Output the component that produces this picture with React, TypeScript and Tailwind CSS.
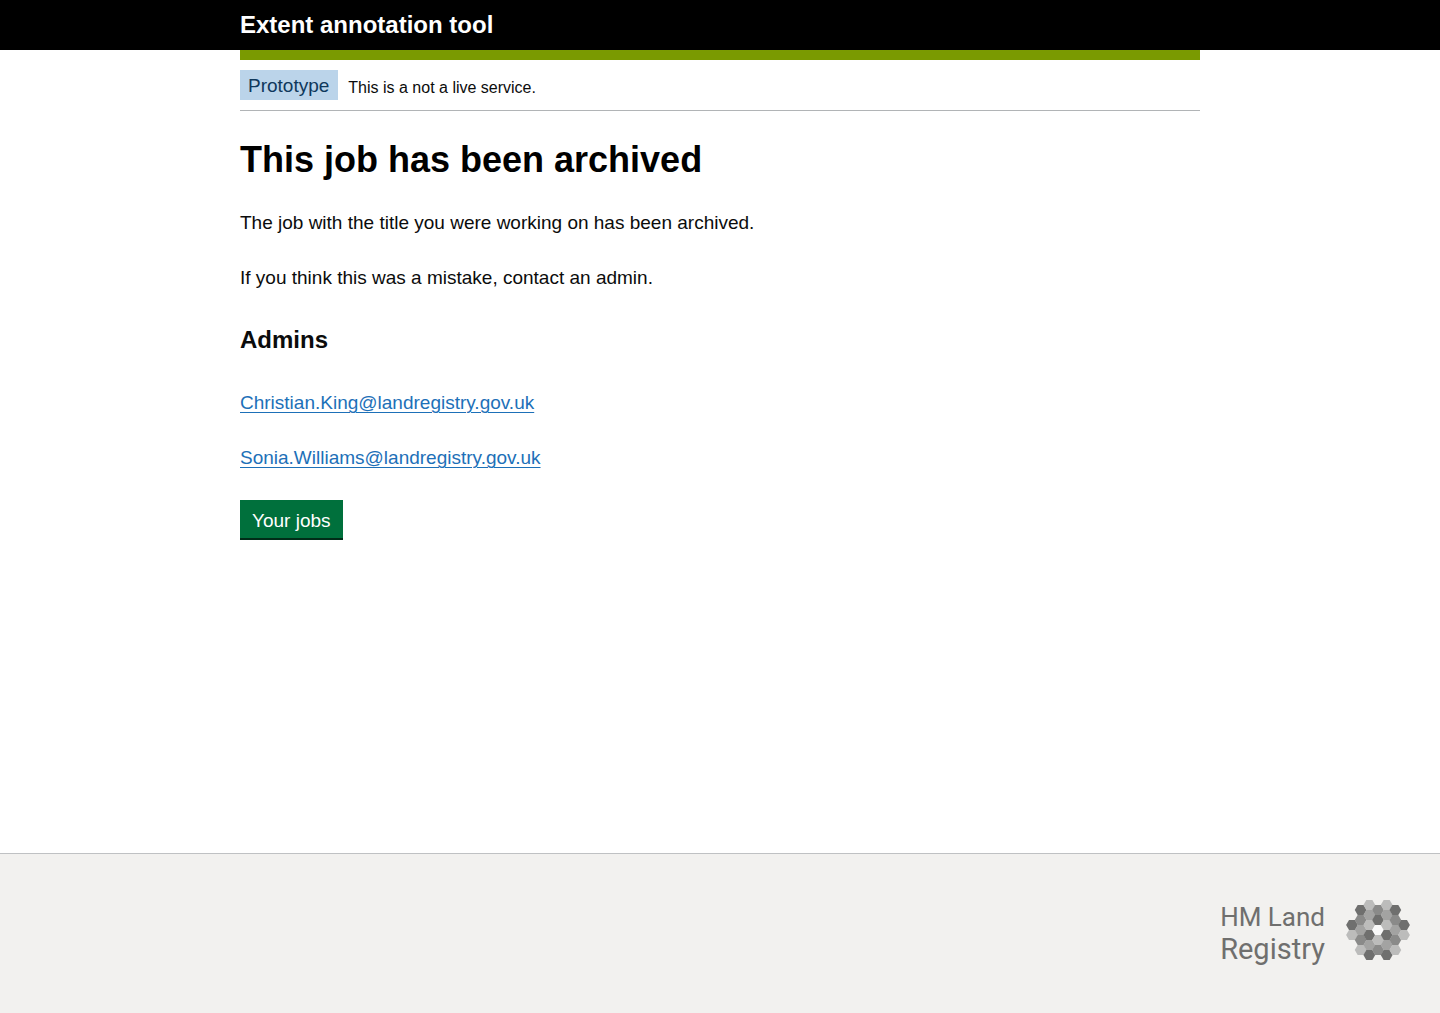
const DARK = '#6f6f6e';
const MID = '#8a8a89';
const SOFT = '#a3a3a2';
const PALE = '#bcbcbb';
const WHITE = '#f9f9f9';

// Columns of the honeycomb emblem: centre x, first centre y, fills from top to bottom.
const columns: { x: number; y: number; fills: string[] }[] = [
  { x: 6, y: 25, fills: [DARK, PALE] },
  { x: 14.67, y: 10, fills: [DARK, MID, SOFT, MID, PALE] },
  { x: 23.33, y: 5, fills: [PALE, SOFT, PALE, DARK, SOFT, DARK] },
  { x: 32, y: 10, fills: [MID, DARK, WHITE, PALE, MID] },
  { x: 40.67, y: 5, fills: [PALE, SOFT, PALE, DARK, SOFT, DARK] },
  { x: 49.33, y: 10, fills: [DARK, MID, SOFT, MID, PALE] },
  { x: 58, y: 25, fills: [DARK, PALE] },
];

function Emblem() {
  return (
    <svg width="64" height="60" viewBox="0 0 64 60" aria-hidden="true">
      {columns.map((c) =>
        c.fills.map((fill, i) => (
          <path
            key={`${c.x}-${i}`}
            transform={`translate(${c.x} ${c.y + i * 10})`}
            d="M-5.9 0L-3 -5.05H3L5.9 0L3 5.05H-3Z"
            fill={fill}
          />
        )),
      )}
    </svg>
  );
}

export default function App() {
  return (
    <div className="flex min-h-screen flex-col bg-white font-['Liberation_Sans',Arial,sans-serif] text-[19px] leading-[25px] text-[#0b0c0c]">
      <header className="bg-black">
        <div className="mx-auto w-full max-w-[960px] py-[10px] text-2xl leading-[30px] font-bold text-white">
          Extent annotation tool
        </div>
      </header>

      <div className="mx-auto w-full max-w-[960px] grow">
        <div className="h-[10px] bg-[#7a9a01]" />
        <div className="flex items-center gap-[10px] border-b border-[#b1b4b6] py-[10px]">
          <strong className="bg-[#bbd4ea] pt-px pr-[9px] pl-2 leading-[29px] font-normal text-[#0f385c]">
            Prototype
          </strong>
          <span className="pt-[5px] text-base">This is a not a live service.</span>
        </div>

        <main className="pb-[30px]">
          <h1 className="mt-[29px] mb-[30px] text-4xl leading-10 font-bold text-black">
            This job has been archived
          </h1>
          <p className="mb-[30px]">The job with the title you were working on has been archived.</p>
          <p className="mb-[35px]">If you think this was a mistake, contact an admin.</p>
          <h2 className="mb-[35px] text-2xl leading-[30px] font-bold">Admins</h2>
          <p className="mb-[30px]">
            <a
              href="mailto:Christian.King@landregistry.gov.uk"
              className="text-[#1d70b8] underline decoration-1 underline-offset-[3px]"
            >
              Christian.King@landregistry.gov.uk
            </a>
          </p>
          <p className="mb-[30px]">
            <a
              href="mailto:Sonia.Williams@landregistry.gov.uk"
              className="text-[#1d70b8] underline decoration-1 underline-offset-[3px]"
            >
              Sonia.Williams@landregistry.gov.uk
            </a>
          </p>
          <button
            type="button"
            className="block border-b-2 border-[#002d18] bg-[#00703c] px-3 pt-2 pb-[5px] text-white"
          >
            Your jobs
          </button>
        </main>
      </div>

      <footer className="flex h-40 items-start justify-end gap-[21px] border-t border-[#bfc1c3] bg-[#f2f1ef] pt-[46px] pr-[30px]">
        <div className="font-[Roboto,sans-serif] text-[#6f6f6e]">
          <div className="text-[26px] leading-[34px]">HM Land</div>
          <div className="text-[29px] leading-[30px]">Registry</div>
        </div>
        <Emblem />
      </footer>
    </div>
  );
}
